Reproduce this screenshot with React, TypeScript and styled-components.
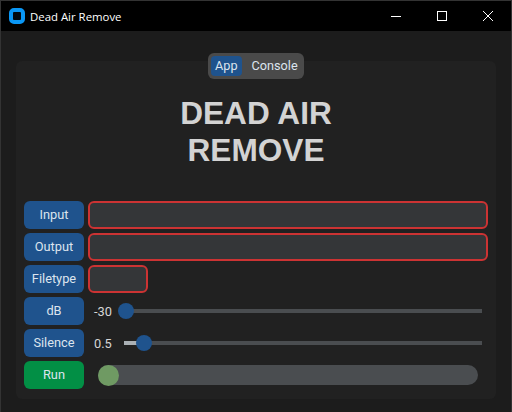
import styled, { createGlobalStyle } from "styled-components";

const GlobalStyle = createGlobalStyle`
  html, body {
    margin: 0;
    padding: 0;
    background: #1c1c1c;
  }
`;

const Window = styled.div`
  width: 512px;
  height: 412px;
  box-sizing: border-box;
  border: 1px solid #333;
  border-bottom: 0;
  background: #1c1c1c;
  display: flex;
  flex-direction: column;
  font-family: Roboto, sans-serif;
  overflow: hidden;
`;

const TitleBar = styled.header`
  height: 30px;
  flex: none;
  background: #000;
  display: flex;
  align-items: center;
  padding-left: 8px;
  color: #fff;
  font: 11.4px "Open Sans", sans-serif;
`;

const AppIcon = styled.span`
  width: 16px;
  height: 16px;
  box-sizing: border-box;
  border: 4px solid #0a97f5;
  border-radius: 5px;
  background: #020a10;
  margin-right: 5px;
`;

const TitleText = styled.span`
  flex: 1;
`;

const WinButton = styled.button`
  width: 46px;
  height: 30px;
  padding: 0;
  border: 0;
  background: transparent;
  display: flex;
  align-items: center;
  justify-content: center;
  svg {
    display: block;
  }
`;

const Content = styled.main`
  flex: 1;
  padding: 30px 15px 13px;
  display: flex;
`;

const Card = styled.section`
  position: relative;
  flex: 1;
  background: #212121;
  border-radius: 6px;
  padding: 34px 8px 0;
`;

const Tabs = styled.nav`
  position: absolute;
  top: -8px;
  left: 192px;
  width: 96px;
  height: 26px;
  box-sizing: border-box;
  padding: 3px;
  background: #4a4a4a;
  border-radius: 6px;
  display: flex;
  font-size: 12.7px;
`;

const Tab = styled.span<{ $active?: boolean }>`
  display: flex;
  align-items: center;
  height: 20px;
  box-sizing: border-box;
  padding: 0 4px 2px;
  border-radius: 4px;
  color: #dce4ee;
  background: ${(p) => (p.$active ? "#1f538d" : "transparent")};
  & + & {
    padding-left: 10px;
  }
`;

const Title = styled.h1`
  margin: 0 0 32px;
  text-align: center;
  color: #d3d3d3;
  font: bold 31.6px/37px "Liberation Sans", sans-serif;
`;

const Rows = styled.div`
  display: flex;
  flex-direction: column;
  gap: 4px;
`;

const Row = styled.div`
  display: flex;
  align-items: center;
  gap: 4px;
  height: 28px;
`;

const Label = styled.div<{ $green?: boolean }>`
  width: 60px;
  height: 28px;
  box-sizing: border-box;
  padding-bottom: 1px;
  flex: none;
  border-radius: 6px;
  background: ${(p) => (p.$green ? "#028f45" : "#1f538d")};
  color: #dce4ee;
  font-size: 12.8px;
  display: flex;
  align-items: center;
  justify-content: center;
`;

const Field = styled.div<{ $short?: boolean }>`
  box-sizing: border-box;
  height: 28px;
  width: ${(p) => (p.$short ? "60px" : "400px")};
  border: 2px solid #cc3333;
  border-radius: 6px;
  background: #343638;
`;

const SliderRow = styled.div`
  flex: 1;
  display: flex;
  align-items: center;
  padding: 0 6px;
`;

const Value = styled.span`
  width: 30px;
  flex: none;
  color: #d6d6d6;
  font-size: 12.8px;
`;

const Track = styled.div`
  position: relative;
  flex: 1;
  height: 4px;
  background: #4a4d50;
`;

const Fill = styled.div`
  height: 100%;
  background: #aab0b5;
`;

const Thumb = styled.div`
  position: absolute;
  top: -6px;
  width: 16px;
  height: 16px;
  margin-left: -8px;
  border-radius: 50%;
  background: #1f538d;
`;

const Progress = styled.div`
  flex: none;
  width: 380px;
  height: 20px;
  margin-left: 10px;
  border-radius: 10px;
  background: #4a4d50;
`;

const Knob = styled.div`
  width: 21px;
  height: 21px;
  margin-top: -0.5px;
  border-radius: 50%;
  background: #6f9a63;
`;

const Slider = ({ value, at }: { value: string; at: number }) => (
  <SliderRow>
    <Value>{value}</Value>
    <Track>
      <Fill style={{ width: at }} />
      <Thumb style={{ left: at }} />
    </Track>
  </SliderRow>
);

export default function App() {
  return (
    <>
      <GlobalStyle />
      <Window>
        <TitleBar>
          <AppIcon />
          <TitleText>Dead Air Remove</TitleText>
          <WinButton>
            <svg width="10" height="10" viewBox="0 0 10 10">
              <path d="M0 5.5h10" stroke="#fff" fill="none" />
            </svg>
          </WinButton>
          <WinButton>
            <svg width="10" height="10" viewBox="0 0 10 10">
              <rect x=".5" y=".5" width="9" height="9" stroke="#fff" fill="none" />
            </svg>
          </WinButton>
          <WinButton>
            <svg width="10" height="10" viewBox="0 0 10 10">
              <path d="M0 0l10 10M10 0L0 10" stroke="#fff" fill="none" />
            </svg>
          </WinButton>
        </TitleBar>
        <Content>
          <Card>
            <Tabs>
              <Tab $active>App</Tab>
              <Tab>Console</Tab>
            </Tabs>
            <Title>
              DEAD AIR
              <br />
              REMOVE
            </Title>
            <Rows>
              <Row>
                <Label>Input</Label>
                <Field />
              </Row>
              <Row>
                <Label>Output</Label>
                <Field />
              </Row>
              <Row>
                <Label>Filetype</Label>
                <Field $short />
              </Row>
              <Row>
                <Label>dB</Label>
                <Slider value="-30" at={2} />
              </Row>
              <Row>
                <Label>Silence</Label>
                <Slider value="0.5" at={20} />
              </Row>
              <Row>
                <Label $green>Run</Label>
                <Progress>
                  <Knob />
                </Progress>
              </Row>
            </Rows>
          </Card>
        </Content>
      </Window>
    </>
  );
}
